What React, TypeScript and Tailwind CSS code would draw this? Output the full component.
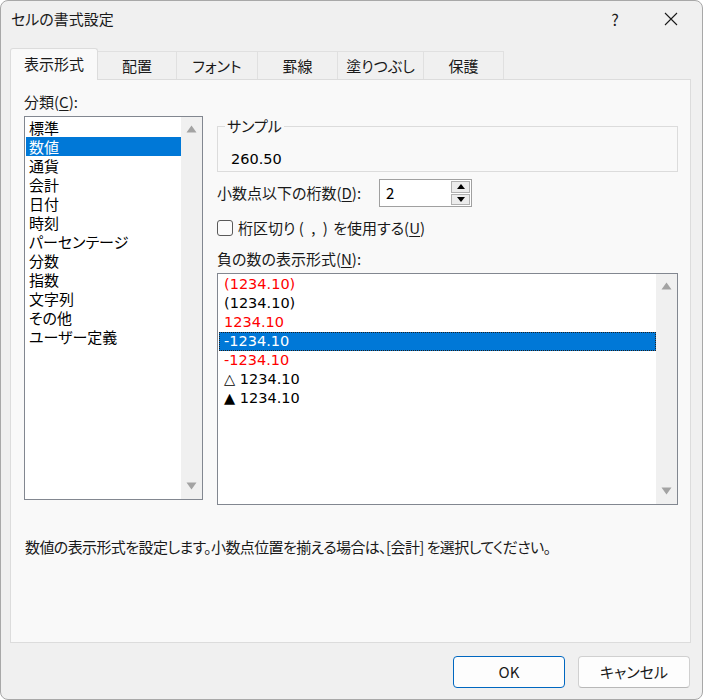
import React from 'react';

const categories = ['標準', '数値', '通貨', '会計', '日付', '時刻', 'パーセンテージ', '分数', '指数', '文字列', 'その他', 'ユーザー定義'];

const negatives: { text: string; red?: boolean; selected?: boolean }[] = [
  { text: '(1234.10)', red: true },
  { text: '(1234.10)' },
  { text: '1234.10', red: true },
  { text: '-1234.10', selected: true },
  { text: '-1234.10', red: true },
  { text: '△ 1234.10' },
  { text: '▲ 1234.10' },
];

const tabs = [
  { label: '表示形式', w: 'w-[88px]', active: true },
  { label: '配置', w: 'w-[79px]' },
  { label: 'フォント', w: 'w-[81px]' },
  { label: '罫線', w: 'w-[80px]' },
  { label: '塗りつぶし', w: 'w-[86px]' },
  { label: '保護', w: 'w-[80px]' },
];

function ScrollArrow({ down }: { down?: boolean }) {
  return (
    <svg width="11" height="8" viewBox="0 0 11 8">
      <polygon points={down ? '0.5,0.5 10.5,0.5 5.5,7.5' : '0.5,7.5 10.5,7.5 5.5,0.5'} fill="#a3a3a3" />
    </svg>
  );
}

// Fake scrollbar track with arrows only (list has no overflow)
function ScrollTrack() {
  return (
    <div className="w-[21px] bg-[#f0f0f0] flex flex-col items-center justify-between pt-[8px] pb-[9px]">
      <ScrollArrow />
      <ScrollArrow down />
    </div>
  );
}

export default function App() {
  return (
    <div className="w-[703px] h-[700px] bg-white font-['Noto_Sans_CJK_JP',sans-serif] [font-feature-settings:'palt'] text-[#1a1a1a]">
      <div className="w-full h-full rounded-[8px] border border-[#a8a8a8] bg-[#f0f0f0] flex flex-col overflow-hidden">
        {/* Title bar */}
        <div className="h-[47px] flex items-start pt-[7px] pl-[10px] shrink-0">
          <span className="text-[15px] leading-[22px]">セルの書式設定</span>
          <div className="ml-auto flex items-center h-[22px] pr-[3px]">
            <span className="w-[56px] text-center text-[16px] leading-[22px]">?</span>
            <div className="w-[56px] flex justify-center">
              <svg width="14" height="14" viewBox="0 0 14 14">
                <path d="M1 1 L13 13 M13 1 L1 13" stroke="#1a1a1a" strokeWidth="1.1" />
              </svg>
            </div>
          </div>
        </div>

        {/* Tabs */}
        <div className="flex items-end h-[31px] ml-[9px] shrink-0 relative z-10">
          {tabs.map((t) =>
            t.active ? (
              <div
                key={t.label}
                className={`${t.w} h-[32px] -mb-[1px] bg-[#f9f9f9] border border-b-0 border-[#dcdcdc] rounded-t-[3px] flex items-center justify-center text-[15px]`}
              >
                {t.label}
              </div>
            ) : (
              <div
                key={t.label}
                className={`${t.w} h-[28px] bg-[#f0f0f0] border border-l-0 border-b-0 border-[#e0e0e0] flex items-center justify-center text-[15px] pt-[2px]`}
              >
                {t.label}
              </div>
            )
          )}
        </div>

        {/* Panel */}
        <div className="ml-[9px] w-[681px] h-[564px] bg-[#f9f9f9] border border-[#dcdcdc] shrink-0 flex flex-col pl-[13px] pt-[12px]">
          <div className="flex gap-[14px]">
            {/* Category column */}
            <div className="w-[179px] flex flex-col">
              <div className="h-[24px] text-[15px] leading-[20px]">
                分類(<span className="underline underline-offset-2">C</span>):
              </div>
              <div className="h-[384px] border border-[#828790] bg-white flex">
                <div className="flex-1 pt-[1px] pl-[1px]">
                  {categories.map((c) => (
                    <div
                      key={c}
                      className={`h-[19px] leading-[19px] pl-[3px] text-[15px] ${c === '数値' ? 'bg-[#0078d7] text-white' : 'text-black'}`}
                    >
                      {c}
                    </div>
                  ))}
                </div>
                <ScrollTrack />
              </div>
            </div>

            {/* Right column */}
            <div className="w-[461px] flex flex-col">
              <div className="relative mt-[34px] h-[46px] border border-[#dcdcdc] pl-[13px] pt-[18px]">
                <span className="absolute left-[7px] -top-[11px] bg-[#f9f9f9] px-[2px] text-[15px] leading-[20px]">サンプル</span>
                <span className="text-[14.5px] leading-[20px] text-black font-['DejaVu_Sans',sans-serif]">260.50</span>
              </div>

              <div className="mt-[7px] h-[28px] flex items-center">
                <div className="w-[162px] text-[15px] leading-[20px]">
                  小数点以下の桁数(<span className="underline underline-offset-2">D</span>):
                </div>
                <div className="w-[93px] h-[28px] border border-[#a0a0a0] bg-white flex">
                  <span className="flex-1 pl-[6px] text-[15px] leading-[26px] text-black">2</span>
                  <div className="w-[20px] flex flex-col gap-[1px] py-[1px] pr-[1px]">
                    <div className="flex-1 border border-[#b0b0b0] bg-[#ececec] flex items-center justify-center">
                      <svg width="8" height="5" viewBox="0 0 8 5"><polygon points="0,5 8,5 4,0" fill="#000" /></svg>
                    </div>
                    <div className="flex-1 border border-[#b0b0b0] bg-[#ececec] flex items-center justify-center">
                      <svg width="8" height="5" viewBox="0 0 8 5"><polygon points="0,0 8,0 4,5" fill="#000" /></svg>
                    </div>
                  </div>
                </div>
              </div>

              <div className="mt-[11px] h-[20px] flex items-center gap-[5px]">
                <div className="w-[16px] h-[16px] border border-[#5a5a5a] rounded-[3px] bg-[#fbfbfb]" />
                <span className="text-[15px] leading-[20px]">
                  桁区切り <span className="tracking-[2px]">( , )</span> を使用する(<span className="underline underline-offset-2">U</span>)
                </span>
              </div>

              <div className="mt-[11px] h-[20px] text-[15px] leading-[20px]">
                負の数の表示形式(<span className="underline underline-offset-2">N</span>):
              </div>

              <div className="mt-[4px] h-[232px] border border-[#828790] bg-white flex">
                <div className="flex-1 pt-[1px] pl-[1px]">
                  {negatives.map((n, i) => (
                    <div
                      key={i}
                      className={`h-[19px] leading-[17px] pl-[4px] text-[14.5px] font-['DejaVu_Sans','Noto_Sans_CJK_JP',sans-serif] ${
                        n.selected
                          ? 'bg-[#0078d7] text-white border border-dotted border-[#222]'
                          : n.red
                            ? 'text-[#ff0000] border border-transparent'
                            : 'text-black border border-transparent'
                      }`}
                    >
                      {n.text}
                    </div>
                  ))}
                </div>
                <ScrollTrack />
              </div>
            </div>
          </div>

          <div className="mt-[32px] text-[15px] leading-[20px] pl-[1px] tracking-[-0.6px]">
            数値の表示形式を設定します。小数点位置を揃える場合は、[会計] を選択してください。
          </div>
        </div>

        {/* Buttons */}
        <div className="flex justify-end gap-[13px] pr-[12px] mt-[13px]">
          <button className="w-[112px] h-[32px] rounded-[4px] border border-[#0067c0] bg-[#fdfdfd] text-[15px]">OK</button>
          <button className="w-[112px] h-[32px] rounded-[4px] border border-[#d0d0d0] border-b-[#b8b8b8] bg-[#fdfdfd] text-[15px]">
            キャンセル
          </button>
        </div>
      </div>
    </div>
  );
}
